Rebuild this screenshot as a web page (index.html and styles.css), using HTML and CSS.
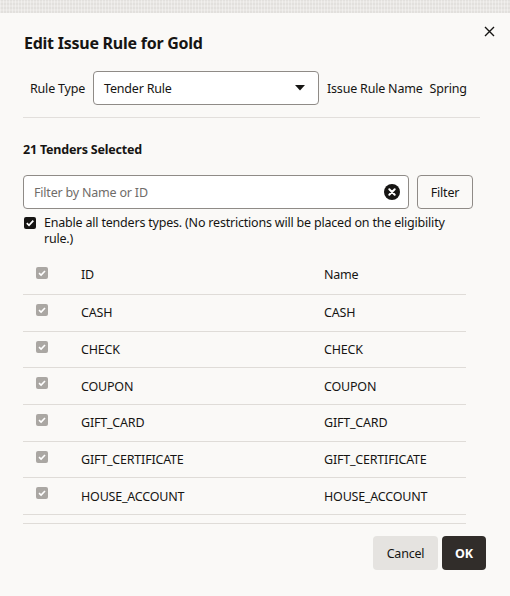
FILE: index.html
```html
<!DOCTYPE html>
<html>
<head>
<meta charset="utf-8">
<link rel="stylesheet" href="styles.css">
</head>
<body>
<div class="backdrop"></div>
<div class="dialog">
  <div class="header">
    <h1 class="title">Edit Issue Rule for Gold</h1>
    <button class="close" aria-label="Close">
      <svg width="11" height="11" viewBox="0 0 11 11"><path d="M1 1L10 10M10 1L1 10" stroke="#161513" stroke-width="1.4" fill="none"/></svg>
    </button>
  </div>

  <div class="rule-row">
    <span class="label rule-label">Rule Type</span>
    <div class="select">
      <span>Tender Rule</span>
      <svg class="caret" width="10" height="6" viewBox="0 0 10 6"><path d="M0 0H10L5 5.5Z" fill="#161513"/></svg>
    </div>
    <span class="label name-label">Issue Rule Name</span>
    <span class="value">Spring</span>
  </div>

  <div class="separator"></div>

  <div class="count">21 Tenders Selected</div>

  <div class="filter-row">
    <div class="search">
      <span class="placeholder">Filter by Name or ID</span>
      <svg class="clear" width="16" height="16" viewBox="0 0 16 16"><circle cx="8" cy="8" r="8" fill="#161513"/><path d="M5.3 5.3L10.7 10.7M10.7 5.3L5.3 10.7" stroke="#fff" stroke-width="2" stroke-linecap="round"/></svg>
    </div>
    <button class="btn-outline">Filter</button>
  </div>

  <div class="enable-row">
    <span class="check dark">
      <svg width="12" height="12" viewBox="0 0 12 12"><path d="M2.8 6.2L5 8.3L9.3 3.6" stroke="#fff" stroke-width="1.8" fill="none"/></svg>
    </span>
    <span class="enable-text">Enable all tenders types. (No restrictions will be placed on the eligibility rule.)</span>
  </div>

  <div class="table">
    <div class="row head">
      <div class="cell-check"><span class="check gray"><svg width="12" height="12" viewBox="0 0 12 12"><path d="M3 6.2L5.1 8.1L9 4" stroke="#fff" stroke-width="1.6" fill="none"/></svg></span></div>
      <div class="cell">ID</div>
      <div class="cell">Name</div>
    </div>
    <div class="body">
      <div class="row">
        <div class="cell-check"><span class="check gray"><svg width="12" height="12" viewBox="0 0 12 12"><path d="M3 6.2L5.1 8.1L9 4" stroke="#fff" stroke-width="1.6" fill="none"/></svg></span></div>
        <div class="cell">CASH</div><div class="cell">CASH</div>
      </div>
      <div class="row">
        <div class="cell-check"><span class="check gray"><svg width="12" height="12" viewBox="0 0 12 12"><path d="M3 6.2L5.1 8.1L9 4" stroke="#fff" stroke-width="1.6" fill="none"/></svg></span></div>
        <div class="cell">CHECK</div><div class="cell">CHECK</div>
      </div>
      <div class="row">
        <div class="cell-check"><span class="check gray"><svg width="12" height="12" viewBox="0 0 12 12"><path d="M3 6.2L5.1 8.1L9 4" stroke="#fff" stroke-width="1.6" fill="none"/></svg></span></div>
        <div class="cell">COUPON</div><div class="cell">COUPON</div>
      </div>
      <div class="row">
        <div class="cell-check"><span class="check gray"><svg width="12" height="12" viewBox="0 0 12 12"><path d="M3 6.2L5.1 8.1L9 4" stroke="#fff" stroke-width="1.6" fill="none"/></svg></span></div>
        <div class="cell">GIFT_CARD</div><div class="cell">GIFT_CARD</div>
      </div>
      <div class="row">
        <div class="cell-check"><span class="check gray"><svg width="12" height="12" viewBox="0 0 12 12"><path d="M3 6.2L5.1 8.1L9 4" stroke="#fff" stroke-width="1.6" fill="none"/></svg></span></div>
        <div class="cell">GIFT_CERTIFICATE</div><div class="cell">GIFT_CERTIFICATE</div>
      </div>
      <div class="row">
        <div class="cell-check"><span class="check gray"><svg width="12" height="12" viewBox="0 0 12 12"><path d="M3 6.2L5.1 8.1L9 4" stroke="#fff" stroke-width="1.6" fill="none"/></svg></span></div>
        <div class="cell">HOUSE_ACCOUNT</div><div class="cell">HOUSE_ACCOUNT</div>
      </div>
      <div class="row">
        <div class="cell-check"></div>
        <div class="cell"></div><div class="cell"></div>
      </div>
    </div>
  </div>

  <div class="footer">
    <button class="btn-cancel">Cancel</button>
    <button class="btn-ok">OK</button>
  </div>
</div>
</body>
</html>
```
FILE: styles.css
```css
* { box-sizing: border-box; }
html, body { margin: 0; padding: 0; }
body {
  background: #faf9f7;
  font-family: "Noto Sans", "Open Sans", sans-serif;
  color: #161513;
  font-size: 12.5px;
  letter-spacing: -0.2px;
  width: 510px;
  height: 596px;
  overflow: hidden;
}
.backdrop {
  height: 13px;
  background-color: #e9e7e4;
  background-image: repeating-linear-gradient(90deg, rgba(255,255,255,.35) 0 1px, transparent 1px 3px),
                    repeating-linear-gradient(0deg, rgba(0,0,0,.03) 0 2px, transparent 2px 4px);
}
.dialog {
  padding: 18px 24px 0 23px;
}
.header {
  display: flex;
  justify-content: space-between;
  align-items: flex-start;
}
.title {
  margin: 0 0 0 1px;
  font-size: 16px;
  letter-spacing: -0.25px;
  line-height: 24px;
  font-weight: 700;
}
.close {
  border: 0;
  background: transparent;
  padding: 0;
  width: 24px;
  height: 24px;
  margin-top: -12px;
  margin-right: -15px;
  display: flex;
  align-items: center;
  justify-content: center;
}
.rule-row {
  display: flex;
  align-items: center;
  margin-top: 16px;
  padding-left: 7px;
}
.select {
  width: 226px;
  height: 34px;
  margin-left: 8px;
  background: #fff;
  border: 1px solid #8f8b87;
  border-radius: 4px;
  display: flex;
  align-items: center;
  justify-content: space-between;
  padding: 0 13px 0 10px;
}
.caret { display: block; }
.name-label { margin-left: 8px; }
.value { margin-left: 7px; }
.separator {
  height: 1px;
  background: #e2dfdc;
  margin: 12px 6px 0 0;
}
.count {
  margin-top: 22px;
  font-weight: 700;
  line-height: 20px;
}
.filter-row {
  display: flex;
  gap: 8px;
  margin-top: 15px;
}
.search {
  width: 386px;
  height: 34px;
  background: #fff;
  border: 1px solid #8f8b87;
  border-radius: 4px;
  display: flex;
  align-items: center;
  justify-content: space-between;
  padding: 0 8px 0 10px;
}
.placeholder { color: #6f6c69; }
.clear { display: block; }
.btn-outline {
  width: 56px;
  height: 34px;
  border: 1px solid #8f8b87;
  border-radius: 4px;
  background: transparent;
  font: inherit;
  letter-spacing: inherit;
  color: #161513;
}
.enable-row {
  display: flex;
  align-items: flex-start;
  margin-top: 6px;
  width: 450px;
}
.check {
  width: 12px;
  height: 12px;
  border-radius: 2px;
  display: inline-flex;
  flex: none;
}
.check svg { display: block; }
.check.dark { background: #161513; margin: 2px 8px 0 1px; }
.check.gray { background: #aaa7a3; }
.enable-text { line-height: 16px; }
.table {
  margin-top: 11px;
  width: 443px;
}
.row {
  display: grid;
  grid-template-columns: 58px 243px 1fr;
  height: 36.7px;
  border-bottom: 1px solid #dfdcd8;
  align-items: center;
}
.row.head { height: 37px; padding-bottom: 3px; }
.cell-check {
  align-self: start;
  padding: 8px 0 0 13px;
}
.head .cell-check { padding-top: 8px; }
.body {
  height: 229px;
  overflow: hidden;
  border-bottom: 1px solid #dfdcd8;
}
.footer {
  display: flex;
  justify-content: flex-end;
  gap: 4px;
  margin-top: 12px;
}
.footer button {
  height: 34px;
  border: 0;
  border-radius: 4px;
  font: inherit;
  letter-spacing: inherit;
}
.btn-cancel {
  width: 65px;
  background: #e5e3e0;
  color: #161513;
}
.btn-ok {
  width: 44px;
  background: #312d2a;
  color: #fff;
  font-weight: 700 !important;
}
```
